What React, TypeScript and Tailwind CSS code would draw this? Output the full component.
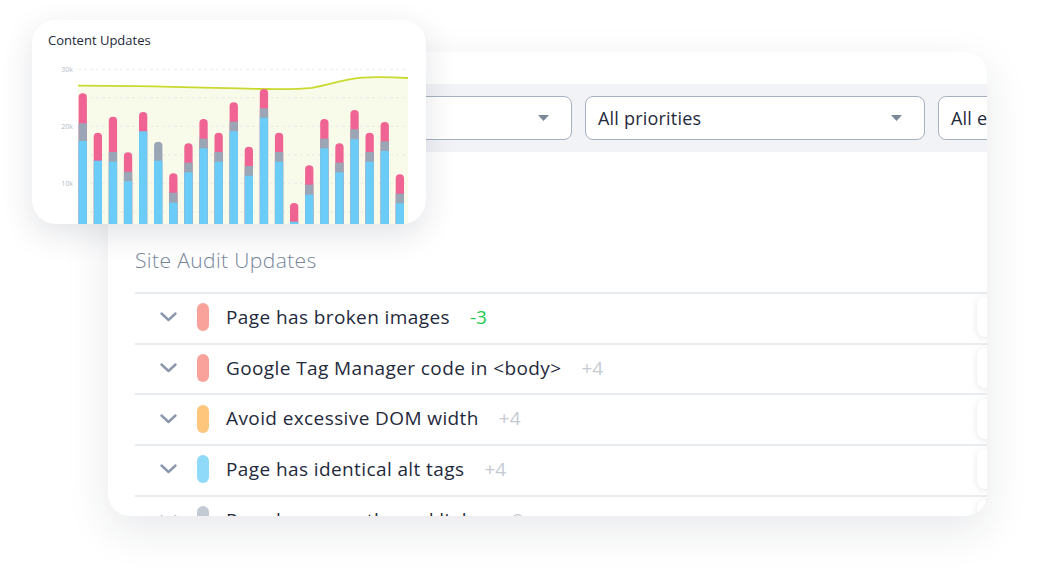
import { ReactNode } from 'react'

const FONT = { fontFamily: '"Open Sans", "Liberation Sans", sans-serif' }

type Bar = [number | null, number | null, number]

const BARS: Bar[] = [
  [33.3, 63.3, 81],
  [72.7, null, 100.7],
  [56.7, 92, 101.7],
  [92.3, 111.7, 121.3],
  [52, null, 71.3],
  [null, 81.7, 100.7],
  [113.3, 132.7, 142.7],
  [83.3, 102.7, 112.3],
  [59, 78.7, 88.3],
  [72.7, 92, 101.7],
  [42.3, 61.7, 71.3],
  [86.7, 106, 115.7],
  [29, 48.3, 57.7],
  [72.7, 92, 101.7],
  [143, null, 161.7],
  [105.3, 124.7, 134.7],
  [59, 78.7, 88.3],
  [83.3, 102.7, 112.3],
  [50, 69.3, 79.3],
  [72.7, 92, 101.7],
  [62, 81.3, 91],
  [114.3, 133.7, 143.3],
]

const PINK = '#ef6492'
const GRAY = '#9aa5b5'
const BLUE = '#6bcdf7'
const BOTTOM = 164

const LINE =
  'M46 25.7 C 100 25.5, 180 28, 231 29 C 255 29.3, 270 29, 280 27.8 C 295 25.5, 310 19.5, 330 17.6 C 345 16.8, 360 17.2, 376 18'

function ContentChart() {
  const grid = [9.3, 37.8, 66.3, 94.8, 123.3, 151.8]
  return (
    <svg width="394" height="164" viewBox="0 0 394 164" className="block">
      <path d={`${LINE} L376 ${BOTTOM} L46 ${BOTTOM} Z`} fill="#f9fbea" />
      {grid.map((y) => (
        <line key={y} x1="46" x2="376" y1={y} y2={y} stroke="#e3e6ea" strokeWidth="0.8" strokeDasharray="3 3" />
      ))}
      {[
        ['30k', 9.3],
        ['20k', 66.3],
        ['10k', 123.3],
      ].map(([t, y]) => (
        <text key={t} x="41" y={Number(y) + 2.5} textAnchor="end" fontSize="7" fill="#b3bac5" style={FONT}>
          {t}
        </text>
      ))}
      <path d={LINE} fill="none" stroke="#c9d92f" strokeWidth="1.8" />
      {BARS.map(([pink, gray, blue], i) => {
        const x = 46.6 + i * 15.1
        const top = pink ?? gray ?? blue
        const topColor = pink !== null ? PINK : gray !== null ? GRAY : BLUE
        return (
          <g key={i}>
            <rect x={x} y={top} width="8.3" height={BOTTOM - top + 6} rx="4.1" fill={topColor} />
            {pink !== null && gray !== null && <rect x={x} y={gray} width="8.3" height={BOTTOM - gray} fill={GRAY} />}
            <rect x={x} y={blue} width="8.3" height={BOTTOM - blue} fill={BLUE} />
          </g>
        )
      })}
    </svg>
  )
}

function Caret() {
  return (
    <svg width="11" height="6" viewBox="0 0 11 6" className="shrink-0">
      <path d="M0 0h11L5.5 6z" fill="#7b8799" />
    </svg>
  )
}

function Select({ label }: { label?: string }) {
  return (
    <div className="flex h-11 w-[340px] shrink-0 items-center justify-between rounded-lg border-[1.5px] border-[#a6b1c1] bg-white pl-3 pr-[22px]">
      <span className="text-[18px] tracking-[0.2px] text-[#1f2a3c]">{label}</span>
      <Caret />
    </div>
  )
}

function Chevron() {
  return (
    <svg width="17" height="10" viewBox="0 0 17 10" className="shrink-0">
      <path d="M1.5 1.5l7 6.5 7-6.5" fill="none" stroke="#8b98ab" strokeWidth="2.4" strokeLinecap="round" strokeLinejoin="round" />
    </svg>
  )
}

function Row({ color, title, delta }: { color: string; title: string; delta: ReactNode }) {
  return (
    <div className="flex h-[50.7px] items-center border-t-2 border-[#e8ebf0] pb-[2px]">
      <div className="ml-[25px]">
        <Chevron />
      </div>
      <span className={`ml-5 h-7 w-3 shrink-0 rounded-full ${color}`} />
      <span className="ml-[17px] whitespace-nowrap text-[19px] tracking-[0.4px] text-[#1f2a3c]">{title}</span>
      <span className="ml-5 text-[19px]">{delta}</span>
      <div className="ml-auto h-10 w-[58px] shrink-0 rounded-lg bg-white shadow-[0_1px_6px_rgba(30,41,59,0.12)]" />
    </div>
  )
}

export default function App() {
  return (
    <div className="relative h-[573px] w-[1050px] overflow-hidden bg-white" style={FONT}>
      <div className="ml-[108px] mt-[52px] h-[464px] w-[879px] overflow-hidden rounded-[22px] bg-white shadow-[0_14px_44px_rgba(30,41,59,0.10)]">
        <div className="mt-8 flex h-[68px] items-center gap-[13px] bg-[#f1f3f6] pl-[124px]">
          <Select />
          <Select label="All priorities" />
          <Select label="All errors" />
        </div>
        <div className="w-[927px] pl-[27px]">
          <h2 className="mt-[94px] text-[21px] font-light leading-7 tracking-[0.4px] text-[#76859b]">Site Audit Updates</h2>
          <div className="mt-[18px]">
            <Row color="bg-[#f9a19b]" title="Page has broken images" delta={<span className="text-[#1ecb4f]">-3</span>} />
            <Row color="bg-[#f9a19b]" title="Google Tag Manager code in <body>" delta={<span className="text-[#c5cad3]">+4</span>} />
            <Row color="bg-[#fdc67c]" title="Avoid excessive DOM width" delta={<span className="text-[#c5cad3]">+4</span>} />
            <Row color="bg-[#8fdaf9]" title="Page has identical alt tags" delta={<span className="text-[#c5cad3]">+4</span>} />
            <Row color="bg-[#c4cad3]" title="Page has no outbound links" delta={<span className="text-[#c5cad3]">+2</span>} />
          </div>
        </div>
      </div>

      <div className="absolute left-8 top-5 h-[204px] w-[394px] overflow-hidden rounded-[24px] bg-white shadow-[0_10px_32px_rgba(30,41,59,0.13)]">
        <p className="pl-4 pt-3 text-[13px] leading-4 text-[#1e293b]">Content Updates</p>
        <div className="mt-3">
          <ContentChart />
        </div>
      </div>
    </div>
  )
}
